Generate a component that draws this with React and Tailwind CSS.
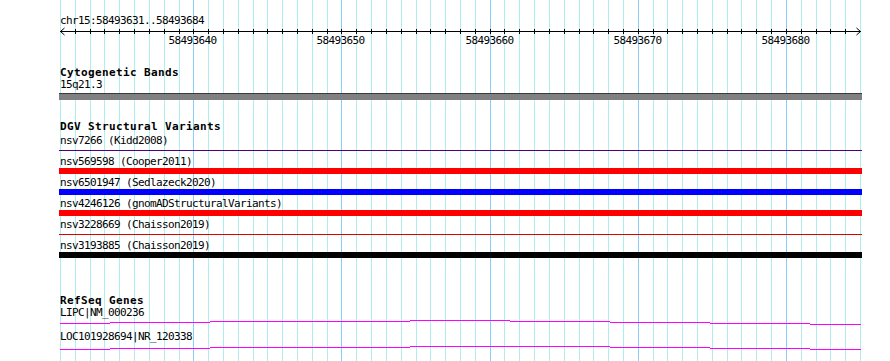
const X0 = 60
const W = 800
const N = 54
const gx = (i) => Math.round(X0 + (i * W) / N) + 0.5
const MAJOR = [9, 19, 29, 39, 49]
const mono = { fontFamily: '"DejaVu Sans Mono", "Liberation Mono", monospace' }

const dgv = [
  { label: 'nsv7266 (Kidd2008)', kind: 'line', color: 'bg-[#4b0082]' },
  { label: 'nsv569598 (Cooper2011)', kind: 'bar', color: 'bg-[#ff0000]' },
  { label: 'nsv6501947 (Sedlazeck2020)', kind: 'bar', color: 'bg-[#0000ff]' },
  { label: 'nsv4246126 (gnomADStructuralVariants)', kind: 'bar', color: 'bg-[#ff0000]' },
  { label: 'nsv3228669 (Chaisson2019)', kind: 'line', color: 'bg-[#dd0000]' },
  { label: 'nsv3193885 (Chaisson2019)', kind: 'bar', color: 'bg-black' },
]

// x breakpoints of the intron hat, then y (px in the row svg) per segment
const steps = [60, 110, 210, 310, 410, 510, 610, 710, 810, 861]
const genes = [
  { label: 'LIPC|NM_000236', ys: [4, 3, 2, 2, 1, 2, 3, 4, 5] },
  { label: 'LOC101928694|NR_120338', ys: [6, 5, 4, 4, 3, 3, 4, 5, 6] },
]

function Grid() {
  return (
    <svg className="absolute inset-0 pointer-events-none" width="890" height="361">
      {Array.from({ length: N + 1 }, (_, i) => (
        <line
          key={i}
          x1={gx(i)}
          x2={gx(i)}
          y1="0"
          y2="361"
          stroke={MAJOR.includes(i) ? '#87cefa' : '#afeeee'}
          strokeWidth="1"
        />
      ))}
    </svg>
  )
}

function Ruler() {
  return (
    <svg className="block ml-[-60px]" width="890" height="20">
      <line x1="60" x2="861" y1="4.5" y2="4.5" stroke="#000" />
      {Array.from({ length: N - 1 }, (_, k) => (
        <line key={k} x1={gx(k + 1)} x2={gx(k + 1)} y1="2" y2="7" stroke="#000" />
      ))}
      <polyline points="64.5,1 60.5,4.5 64.5,8" fill="none" stroke="#000" />
      <polyline points="856.5,1 860.5,4.5 856.5,8" fill="none" stroke="#000" />
      {MAJOR.map((i) => (
        <text
          key={i}
          x={gx(i) - 1}
          y="16.5"
          fontSize="11"
          letterSpacing="-0.62"
          textAnchor="middle"
          style={mono}
          fill="#000"
        >
          {58493631 + i}
        </text>
      ))}
    </svg>
  )
}

function TrackTitle({ children, className = '' }) {
  return (
    <div className={`h-[12px] leading-[12px] text-[11px] tracking-[0.38px] font-bold text-black ${className}`}>
      {children}
    </div>
  )
}

function Label({ children }) {
  return (
    <div className="h-[12px] leading-[12px] text-[11px] tracking-[-0.62px] text-black whitespace-nowrap">
      {children}
    </div>
  )
}

export default function App() {
  return (
    <div className="relative w-[890px] h-[361px] bg-white overflow-hidden" style={mono}>
      <Grid />
      <div className="relative pl-[60px] pt-[15px]">
        <Label>chr15:58493631..58493684</Label>
        <Ruler />

        <TrackTitle className="mt-[20px]">Cytogenetic Bands</TrackTitle>
        <Label>15q21.3</Label>
        <div className="mt-[2px] ml-[-1px] w-[803px] h-[7px] bg-[#808080] border-t border-[#3a3a3a]" />

        <TrackTitle className="mt-[21px] mb-[2px]">DGV Structural Variants</TrackTitle>
        {dgv.map((f) => (
          <div key={f.label} className="h-[21px]">
            <Label>{f.label}</Label>
            <div className="h-[6px] flex items-center ml-[-1px] w-[803px]">
              <div className={`w-full ${f.kind === 'bar' ? 'h-[6px]' : 'h-[1px]'} ${f.color}`} />
            </div>
          </div>
        ))}

        <TrackTitle className="mt-[34px]">RefSeq Genes</TrackTitle>
        {genes.map((g) => (
          <div key={g.label} className="h-[24px]">
            <Label>{g.label}</Label>
            <svg className="block ml-[-60px]" width="890" height="8">
              {g.ys.map((y, k) => (
                <rect key={k} x={steps[k]} y={y} width={steps[k + 1] - steps[k]} height="1" fill="#ff00ff" />
              ))}
            </svg>
          </div>
        ))}
      </div>
    </div>
  )
}
